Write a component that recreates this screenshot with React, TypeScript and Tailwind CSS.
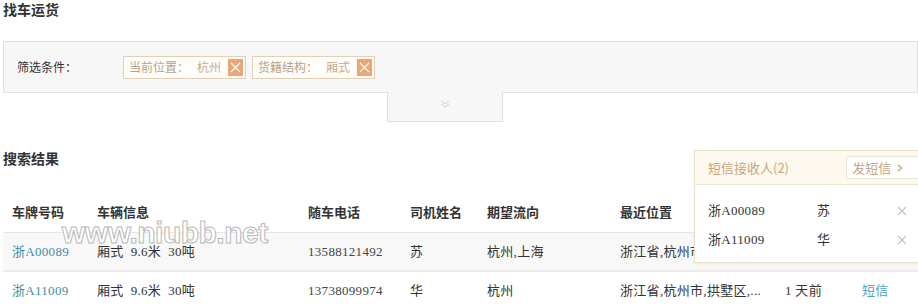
import React from "react";

const serif = "font-['Liberation_Serif','Noto_Sans_CJK_SC',serif]";
const sans = "font-['Noto_Sans_CJK_SC','Liberation_Sans',sans-serif]";

type Row = {
  plate: string;
  info: string;
  phone: string;
  driver: string;
  flow: string;
  location: string;
  when?: string;
  action?: string;
};

const rows: Row[] = [
  {
    plate: "浙A00089",
    info: "厢式\u00a0\u00a09.6米\u00a0\u00a030吨",
    phone: "13588121492",
    driver: "苏",
    flow: "杭州,上海",
    location: "浙江省,杭州市,拱墅区,...",
    when: "1\u00a0天前",
    action: "短信",
  },
  {
    plate: "浙A11009",
    info: "厢式\u00a0\u00a09.6米\u00a0\u00a030吨",
    phone: "13738099974",
    driver: "华",
    flow: "杭州",
    location: "浙江省,杭州市,拱墅区,...",
    when: "1\u00a0天前",
    action: "短信",
  },
];

const cols = "grid grid-cols-[85px_211px_102px_77px_133px_165px_77px_1fr] pl-[9px]";

function FilterTag({ label, value }: { label: string; value: string }) {
  return (
    <div className="flex h-[23px] w-[123px] items-center border border-[#e3cfb3] bg-[#fffdfa] pl-[5px] pr-[2px] text-[12px]">
      <span className="text-[#b4a48c]">{label}</span>
      <span className="ml-[8px] text-[#c9aa8a]">{value}</span>
      <span className="ml-auto flex h-[17px] w-[15px] items-center justify-center bg-[#eaa677]">
        <svg width="11" height="11" viewBox="0 0 11 11">
          <path d="M1 1L10 10M10 1L1 10" stroke="#fff" strokeWidth="1.1" />
        </svg>
      </span>
    </div>
  );
}

export default function App() {
  return (
    <div className={`relative h-[306px] w-[918px] overflow-hidden bg-white text-[#333] ${sans}`}>
      <h1 className="pl-[3px] pt-px text-[14px] font-bold leading-[16px] text-[#333]">找车运货</h1>

      <div className="ml-[3px] mt-[24px] flex h-[52px] items-center border border-[#dfdfdf] bg-[#f7f7f7] pl-[13px]">
        <span className="w-[106px] text-[12px] text-[#333]">筛选条件：</span>
        <div className="flex gap-[6px]">
          <FilterTag label="当前位置：" value="杭州" />
          <FilterTag label="货籍结构：" value="厢式" />
        </div>
      </div>
      <div className="ml-[387px] -mt-px flex h-[30px] w-[116px] justify-center border-x border-b border-[#dfdfdf] bg-[#f7f7f7] pt-[8px]">
        <svg width="10" height="8" viewBox="0 0 10 8">
          <path d="M1 1L5 4L9 1M1 4L5 7L9 4" fill="none" stroke="#cfcfcf" strokeWidth="1" />
        </svg>
      </div>

      <h2 className="mt-[28px] pl-[3px] text-[14px] font-bold leading-[16px] text-[#333]">搜索结果</h2>

      <div className="ml-[3px] mt-[36px]">
        <div className={`${cols} h-[31px] items-start border-b border-[#e6e6e6] text-[13px] font-bold text-[#333]`}>
          <span>车牌号码</span>
          <span>车辆信息</span>
          <span>随车电话</span>
          <span>司机姓名</span>
          <span>期望流向</span>
          <span>最近位置</span>
          <span />
          <span />
        </div>
        {rows.map((r, i) => (
          <div
            key={r.plate}
            className={`${cols} h-[39px] items-center border-b-2 border-[#ececec] text-[13px] tracking-[0.3px] ${serif} ${
              i === 0 ? "bg-[#f8f8f8]" : "bg-white"
            }`}
          >
            <span className="text-[#3b8fa3]">{r.plate}</span>
            <span className="text-[#333]">{r.info}</span>
            <span className="text-[#444]">{r.phone}</span>
            <span className="text-[#333]">{r.driver}</span>
            <span className="text-[#333]">{r.flow}</span>
            <span className="whitespace-nowrap text-[#333]">{r.location}</span>
            <span className="text-[#333]">{r.when}</span>
            <span className="text-[#4aa3c4]">{r.action}</span>
          </div>
        ))}
      </div>

      <div
        className="pointer-events-none absolute left-[62px] top-[218px] font-['Liberation_Sans',sans-serif] text-[30px] font-bold leading-[30px] tracking-[-0.5px] text-white [-webkit-text-stroke:1px_#b9b9b9]"
        aria-hidden
      >
        www.niubb.net
      </div>

      <div className="absolute left-[694px] top-[150px] w-[230px] border border-[#ebdfca] bg-white shadow-[0_1px_3px_rgba(0,0,0,0.06)]">
        <div className="flex h-[34px] items-center border-b border-[#f1e5cf] bg-[#fdf9ee] pl-[13px]">
          <span className="w-[145px] text-[13px] text-[#c8a77a]">短信接收人(2)</span>
          <span className="flex h-[23px] w-[80px] items-center border border-[#ece4d4] bg-white pl-[5px] text-[13px] text-[#c4a684]">
            发短信
            <svg className="ml-[6px]" width="6" height="8" viewBox="0 0 6 8">
              <path d="M1 1L4.5 4L1 7" fill="none" stroke="#c9ad8c" strokeWidth="1.6" />
            </svg>
          </span>
        </div>
        <div className={`flex flex-col pb-[8px] pt-[11px] text-[13px] tracking-[0.3px] ${serif}`}>
          {[
            ["浙A00089", "苏"],
            ["浙A11009", "华"],
          ].map(([p, d]) => (
            <div key={p} className="flex h-[29px] items-center pl-[13px]">
              <span className="w-[109px] text-[#333]">{p}</span>
              <span className="w-[80px] text-[#333]">{d}</span>
              <svg width="10" height="10" viewBox="0 0 10 10">
                <path d="M1 1L9 9M9 1L1 9" stroke="#c4c4c4" strokeWidth="1.2" />
              </svg>
            </div>
          ))}
        </div>
      </div>
    </div>
  );
}
